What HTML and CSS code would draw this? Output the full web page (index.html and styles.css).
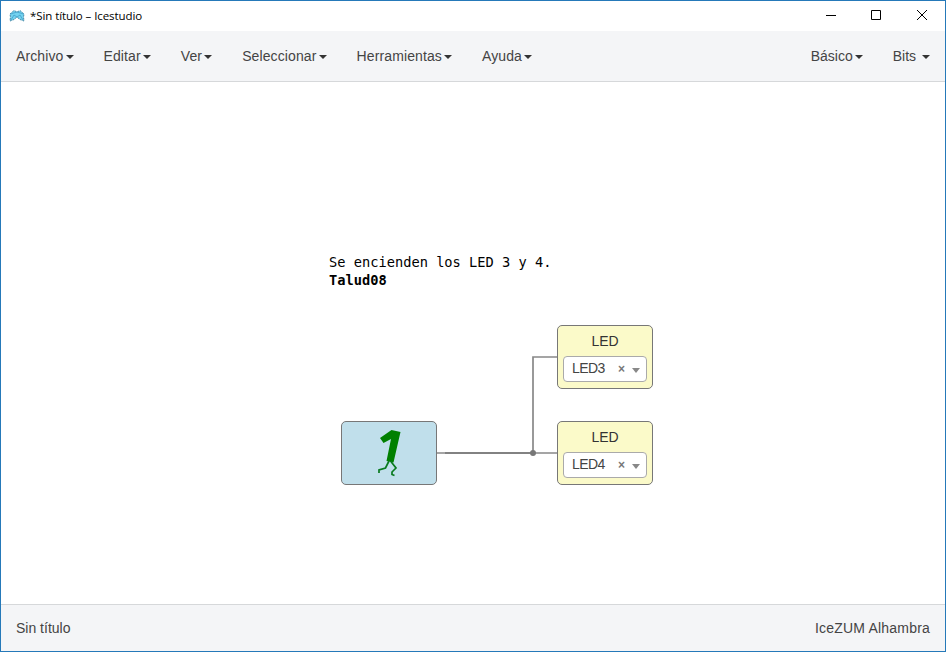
FILE: index.html
```html
<!DOCTYPE html>
<html lang="es">
<head>
<meta charset="utf-8">
<title>*Sin título – Icestudio</title>
<link rel="stylesheet" href="styles.css">
</head>
<body>
<div class="window">
  <header class="titlebar">
    <svg class="app-icon" width="16" height="14" viewBox="0 0 16 14">
      <path d="M1 5L5 1.5L8 3L11 1.5L15 5L14.5 8L15 12L11 10.5L8 8L5 10.5L1 12L1.5 8Z" fill="#72d2ef" stroke="#4c8ba8" stroke-dasharray="2 1"/>
      <path d="M1.5 5L8 3L14.5 5M2 11L5 6L8 8L11 6L14 11" fill="none" stroke="#439fc9" stroke-width=".8"/>
    </svg>
    <span class="window-title">*Sin título – Icestudio</span>
    <svg class="controls" width="104" height="12" viewBox="0 0 104 12" fill="none" stroke="#000">
      <path d="M0 6.5H10M45.500 1.500H54.500V10.500H45.500ZM91 1L101 11M101 1L91 11"/>
    </svg>
  </header>
  <nav class="navbar">
    <div class="menu menu-main">
      <a>Archivo<i class="caret"></i></a>
      <a>Editar<i class="caret"></i></a>
      <a>Ver<i class="caret"></i></a>
      <a>Seleccionar<i class="caret"></i></a>
      <a>Herramientas<i class="caret"></i></a>
      <a>Ayuda<i class="caret"></i></a>
    </div>
    <div class="menu">
      <a>Básico<i class="caret"></i></a>
      <a>Bits <i class="caret"></i></a>
    </div>
  </nav>
  <main class="canvas">
    <svg class="wires" width="944" height="522" viewBox="0 0 944 522">
      <path d="M436 371H532M532 371H556M532 371V275H556" fill="none" stroke="#888" stroke-width="1.7"/>
      <path d="M444 371H532" stroke="#777" stroke-width="1.7"/>
      <circle cx="532" cy="371" r="3" fill="#777"/>
    </svg>
    <div class="note">Se encienden los LED 3 y 4.<br><b>Talud08</b></div>
    <div class="block constant">
      <svg width="94" height="62" viewBox="0 0 94 62">
        <path d="M38 16L49.500 8L58.500 10L51.500 40.500L44.500 39L49 17L41.500 21Z" fill="#008000"/>
        <path d="M47 39L43.500 46L37 48V51M48.500 39L54 46L50 50V52.500L52.500 53.500" fill="none" stroke="#087a1e" stroke-width="1.700"/>
      </svg>
    </div>
    <div class="block led led-upper">
      <div class="label">LED</div>
      <div class="select"><span class="value">LED3</span><span class="clear">×</span><i class="arrow"></i></div>
    </div>
    <div class="block led led-lower">
      <div class="label">LED</div>
      <div class="select"><span class="value">LED4</span><span class="clear">×</span><i class="arrow"></i></div>
    </div>
  </main>
  <footer class="footer"><span>Sin título</span><span class="board">IceZUM Alhambra</span></footer>
</div>
</body>
</html>
```
FILE: styles.css
```css
* { box-sizing: border-box; }
body {
  margin: 0;
  font: 14px/20px "Liberation Sans", Arial, sans-serif;
  color: #444;
}
.window {
  width: 946px;
  height: 652px;
  display: flex;
  flex-direction: column;
  border: 1px solid #2579b9;
  background: #fff;
  overflow: hidden;
}
.titlebar {
  height: 30px;
  flex: none;
  display: flex;
  align-items: center;
  padding: 0 15px 0 8px;
}
.app-icon { margin-right: 5px; }
.window-title {
  font: 11.5px/16px "Open Sans", "Noto Sans", sans-serif;
  letter-spacing: -0.08px;
  color: #000;
}
.controls {
  margin-left: auto;
  margin-top: -2px;
}
.navbar {
  height: 51px;
  flex: none;
  display: flex;
  justify-content: space-between;
  background: #f4f5f7;
  border-bottom: 1px solid #d6d8da;
}
.menu { display: flex; }
.menu a { padding: 15px; white-space: pre; }
.menu-main { letter-spacing: 0.115px; }
.caret {
  display: inline-block;
  margin-left: 2px;
  vertical-align: middle;
  border: 4px solid transparent;
  border-top-color: #333;
  border-bottom: 0;
}
.canvas {
  position: relative;
  flex: 1;
}
.wires {
  position: absolute;
  left: 0;
  top: 0;
}
.note {
  position: absolute;
  left: 328px;
  top: 171px;
  font: 13.7px/18px "DejaVu Sans Mono", monospace;
  color: #000;
  white-space: nowrap;
}
.block {
  position: absolute;
  width: 96px;
  height: 64px;
  border: 1px solid #777;
  border-radius: 5px;
}
.constant {
  left: 340px;
  top: 339px;
  background: #c0dfeb;
}
.led {
  left: 556px;
  padding: 5px;
  background: #fbfac9;
}
.led-upper { top: 243px; }
.led-lower { top: 339px; }
.label {
  text-align: center;
  color: #333;
  margin-bottom: 5px;
}
.select {
  height: 26px;
  display: flex;
  align-items: center;
  padding: 0 6px 2px 8px;
  background: #fff;
  border: 1px solid #aaa;
  border-radius: 4px;
}
.value { letter-spacing: -0.6px; }
.clear {
  margin-left: auto;
  margin-right: 7px;
  margin-top: 2px;
  font-size: 12px;
  font-weight: bold;
  color: #777;
}
.arrow {
  margin-top: 4px;
  border: 4px solid transparent;
  border-top: 5px solid #888;
  border-bottom: 0;
}
.footer {
  height: 47px;
  flex: none;
  display: flex;
  align-items: center;
  justify-content: space-between;
  padding: 0 15px;
  background: #f4f5f7;
  border-top: 1px solid #d6d8da;
}
.board { letter-spacing: 0.2px; }
```
